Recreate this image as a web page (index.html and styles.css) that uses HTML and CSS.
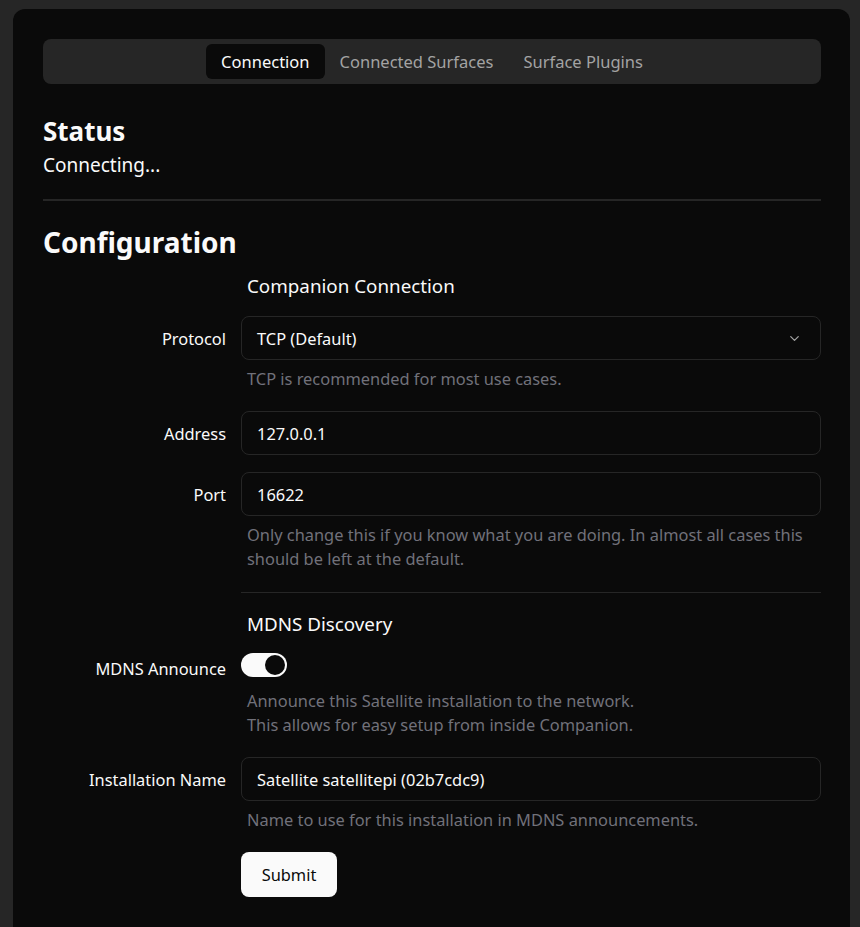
FILE: index.html
```html
<!DOCTYPE html>
<html lang="en">
<head>
<meta charset="utf-8">
<title>Satellite</title>
<link rel="stylesheet" href="styles.css">
</head>
<body>
<main class="card">
  <nav class="tabs">
    <span class="tab active">Connection</span>
    <span class="tab">Connected Surfaces</span>
    <span class="tab">Surface Plugins</span>
  </nav>

  <section class="status">
    <h2 class="h-status">Status</h2>
    <p class="status-text">Connecting...</p>
  </section>

  <hr class="rule">

  <h2 class="h-config">Configuration</h2>

  <form class="form">
    <div class="row">
      <div class="label empty"></div>
      <div class="field"><h3 class="group-title">Companion Connection</h3></div>
    </div>

    <div class="row">
      <label class="label">Protocol</label>
      <div class="field">
        <div class="input select">
          <span>TCP (Default)</span>
          <svg class="chev" width="16" height="16" viewBox="0 0 24 24" fill="none" stroke="currentColor" stroke-width="2" stroke-linecap="round" stroke-linejoin="round"><path d="m6 9 6 6 6-6"/></svg>
        </div>
        <p class="help">TCP is recommended for most use cases.</p>
      </div>
    </div>

    <div class="row">
      <label class="label">Address</label>
      <div class="field"><div class="input">127.0.0.1</div></div>
    </div>

    <div class="row">
      <label class="label">Port</label>
      <div class="field">
        <div class="input">16622</div>
        <p class="help">Only change this if you know what you are doing. In almost all cases this should be left at the default.</p>
      </div>
    </div>

    <div class="row">
      <div class="label empty"></div>
      <div class="field"><hr class="rule sub"></div>
    </div>

    <div class="row">
      <div class="label empty"></div>
      <div class="field"><h3 class="group-title second">MDNS Discovery</h3></div>
    </div>

    <div class="row">
      <label class="label switch-label">MDNS Announce</label>
      <div class="field">
        <div class="switch"><span class="thumb"></span></div>
        <p class="help">Announce this Satellite installation to the network.<br>This allows for easy setup from inside Companion.</p>
      </div>
    </div>

    <div class="row">
      <label class="label">Installation Name</label>
      <div class="field">
        <div class="input">Satellite satellitepi (02b7cdc9)</div>
        <p class="help">Name to use for this installation in MDNS announcements.</p>
      </div>
    </div>

    <div class="row">
      <div class="label empty"></div>
      <div class="field"><button type="button" class="btn">Submit</button></div>
    </div>
  </form>
</main>
</body>
</html>
```

FILE: styles.css
```css
* { box-sizing: border-box; }
html, body { margin: 0; }
body {
  background: #262626;
  padding: 9px 10px 0 13px;
  font-family: "Noto Sans", "Open Sans", sans-serif;
  color: #fafafa;
  font-size: 16.4px;
}
.card {
  background: #0a0a0a;
  border-radius: 12px 12px 0 0;
  padding: 30px 29px 40px 30px;
  min-height: 930px;
}
.tabs {
  display: flex;
  justify-content: center;
  background: #262626;
  border-radius: 8px;
  height: 45px;
  padding: 5px;
}
.tab {
  display: flex;
  align-items: center;
  padding: 0 15px;
  height: 35px;
  color: #a3a3a3;
  font-size: 16.5px;
  border-radius: 6px;
}
.tab.active {
  background: #0a0a0a;
  color: #fafafa;
}
.status { margin-top: 30px; }
.h-status {
  margin: 0;
  font-size: 26px;
  font-weight: 700;
  line-height: 34px;
}
.status-text {
  margin: 2px 0 0;
  font-size: 19px;
  line-height: 30px;
}
.rule {
  border: 0;
  border-top: 2px solid #262626;
  margin: 19px 0 0;
}
.rule.sub { margin: 1px 0 0; border-top-width: 1px; }
.h-config {
  margin: 23px 0 0;
  font-size: 28px;
  font-weight: 700;
  line-height: 36px;
}
.form {
  display: flex;
  flex-direction: column;
  gap: 16px;
  margin-top: 12px;
}
.row {
  display: grid;
  grid-template-columns: 183px 1fr;
  column-gap: 15px;
}
.label {
  text-align: right;
  line-height: 44px;
  padding-top: 1px;
  color: #fafafa;
}
.label.empty { line-height: 0; padding: 0; }
.group-title {
  margin: 0;
  padding-left: 6px;
  font-size: 18.8px;
  font-weight: 400;
  line-height: 28px;
}
.group-title.second { padding-top: 3px; line-height: 25px; }
.input {
  height: 44px;
  border: 1px solid #262626;
  border-radius: 8px;
  padding: 0 15px;
  display: flex;
  align-items: center;
  color: #fafafa;
}
.select { justify-content: space-between; }
.chev { color: #a3a3a3; width: 15px; height: 15px; margin-right: 3px; }
.help {
  margin: 7px 0 4px;
  padding-left: 6px;
  line-height: 24px;
  color: #71717a;
}
.switch {
  margin: 0 0 12px;
  width: 46px;
  height: 24px;
  border-radius: 12px;
  background: #fafafa;
  display: flex;
  align-items: center;
  justify-content: flex-end;
  padding: 2px;
}
.thumb {
  width: 20px;
  height: 20px;
  border-radius: 50%;
  background: #0a0a0a;
}
.label.switch-label { line-height: 24px; padding-top: 4px; }
.btn {
  height: 45px;
  width: 96px;
  border: 0;
  border-radius: 8px;
  background: #fafafa;
  color: #0a0a0a;
  font-family: inherit;
  font-size: 16.4px;
}
```
